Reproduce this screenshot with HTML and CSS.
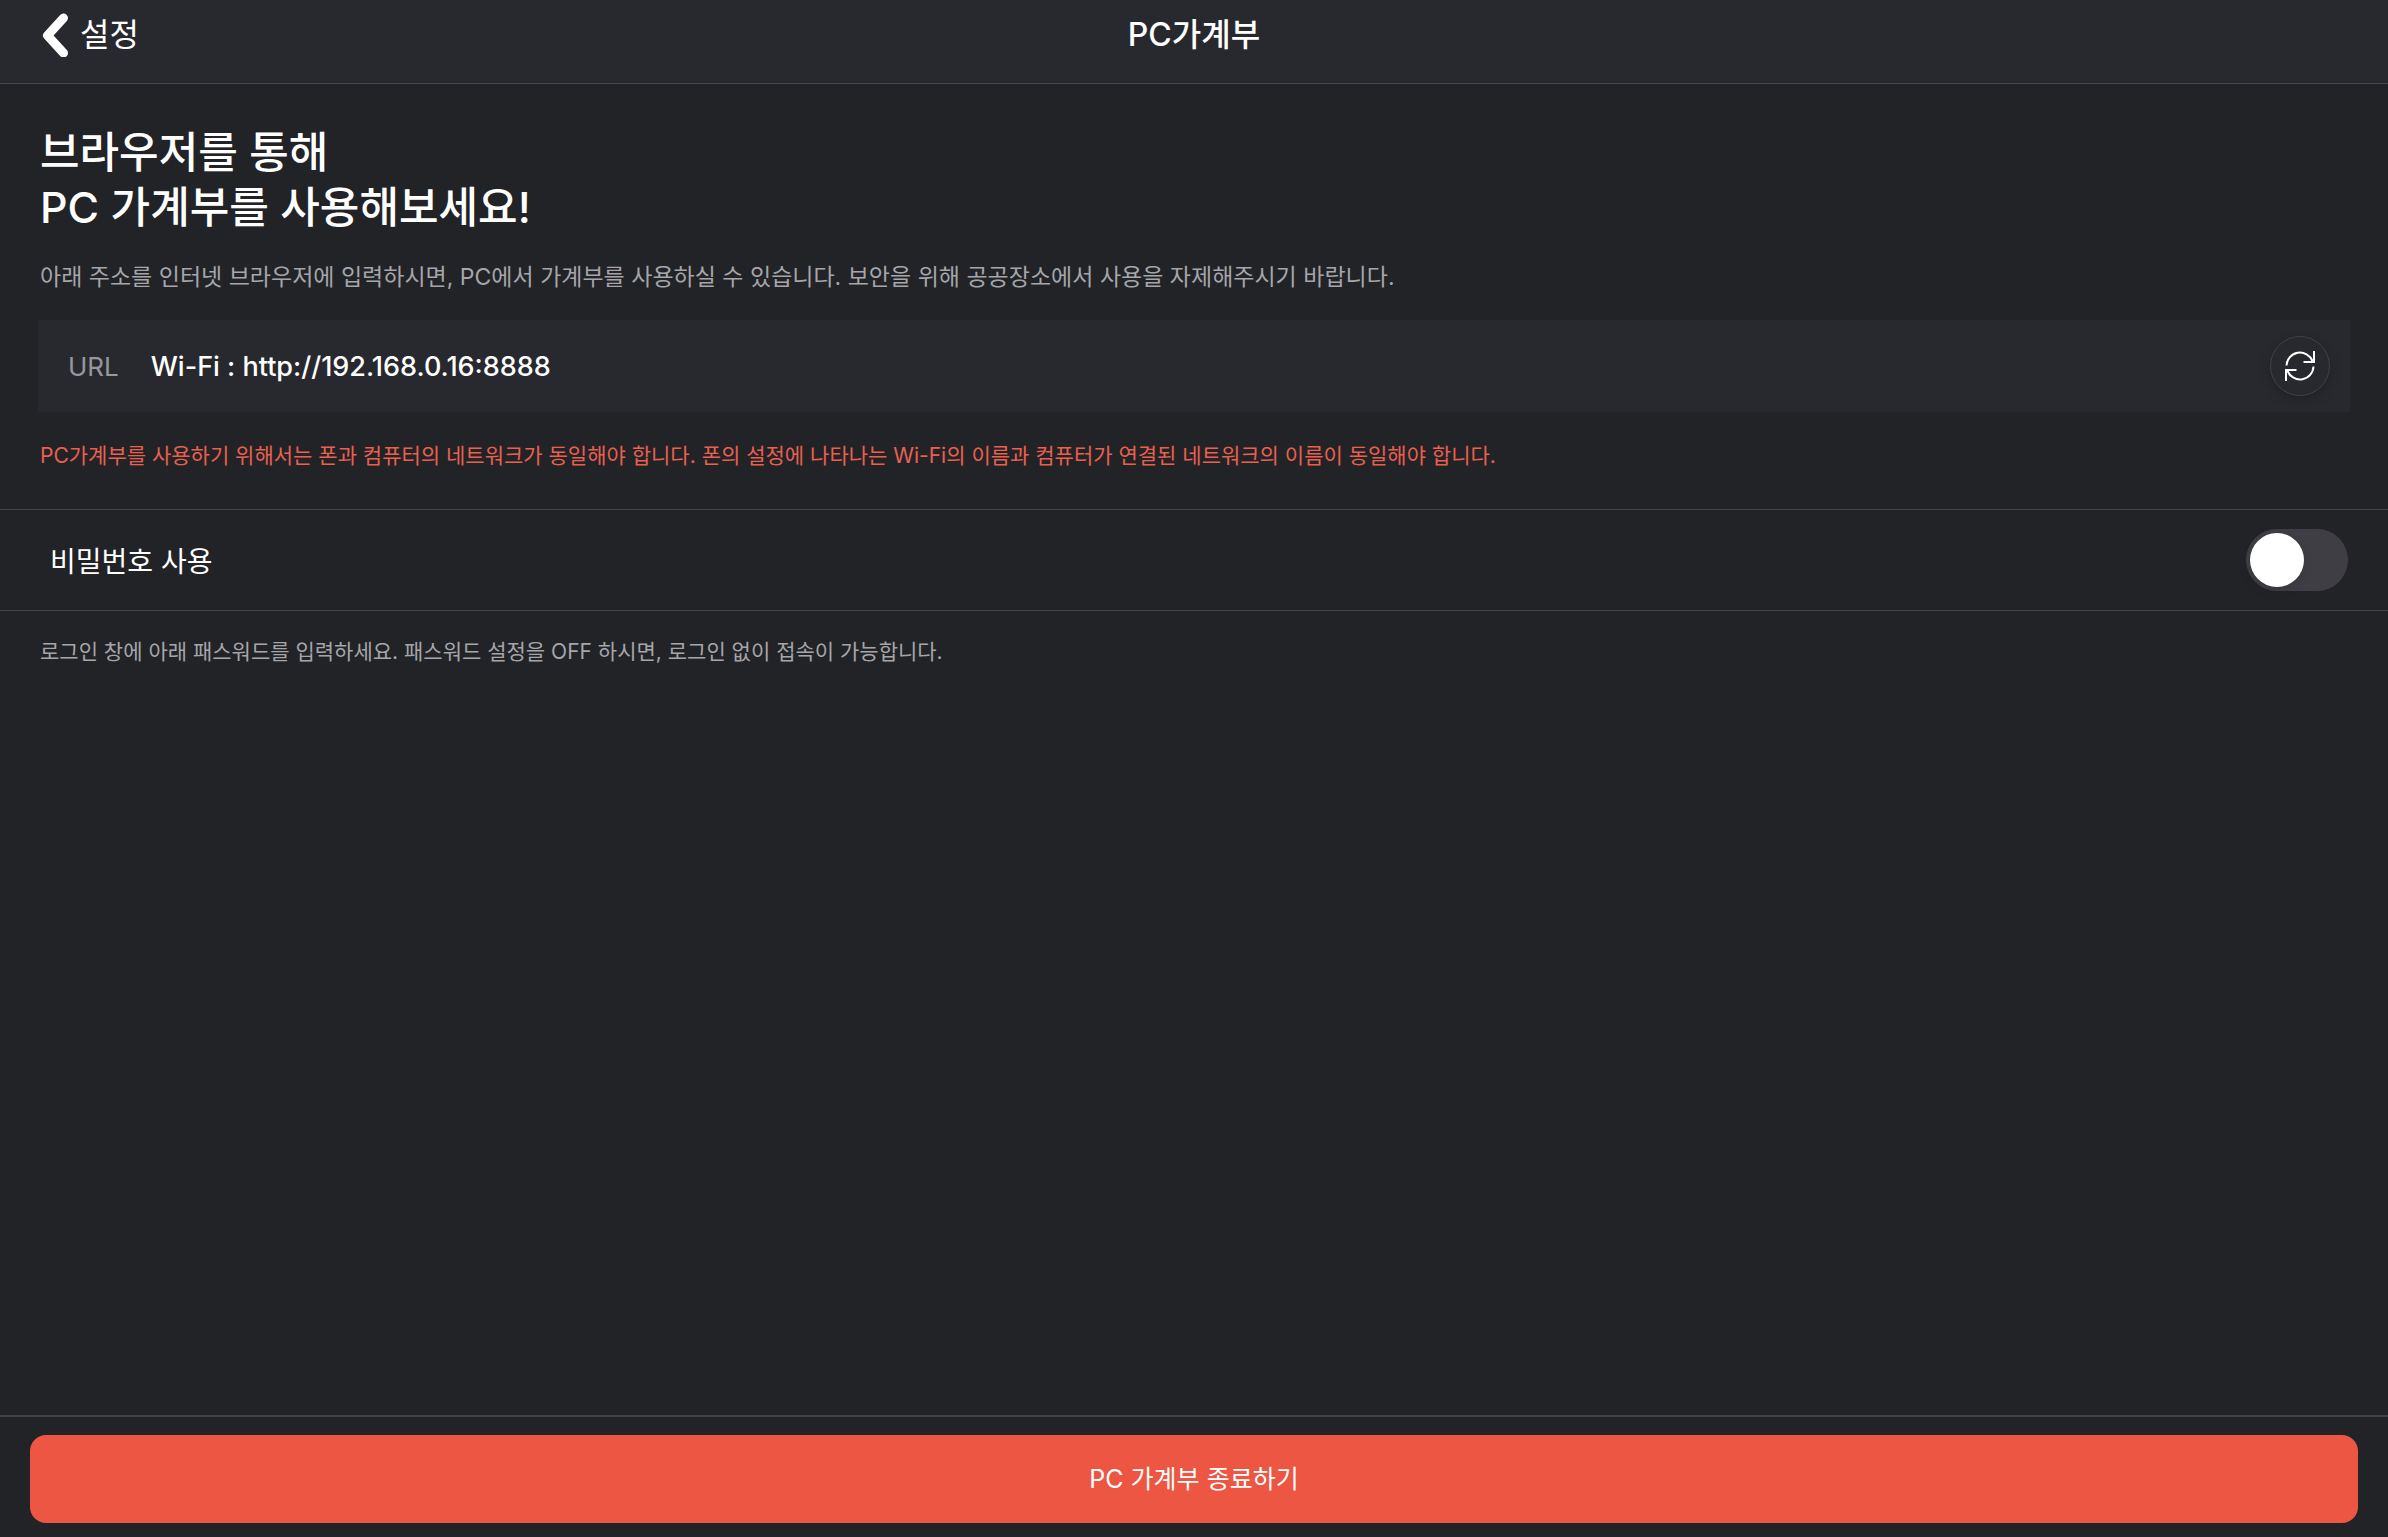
FILE: index.html
```
<!DOCTYPE html>
<html lang="ko">
<head>
    <meta charset="UTF-8">
    <meta name="viewport" content="width=device-width, initial-scale=1.0">
    <title>PC가계부</title>
    <link rel="stylesheet" href="styles.css">
</head>
<body>
    <header class="top-bar">
        <a class="back" href="#settings">
            <svg class="back-icon" width="28" height="44" viewBox="0 0 28 44" aria-hidden="true">
                <path d="M23.500 5L7.500 22.500L23.500 40" fill="none" stroke="#fff" stroke-width="9" stroke-linecap="round" stroke-linejoin="round"/>
            </svg>
            <span>설정</span>
        </a>
        <h1 class="top-title">PC가계부</h1>
    </header>

    <main>
        <section class="intro">
            <h2>브라우저를 통해<br>PC 가계부를 사용해보세요!</h2>
            <p class="intro-text">아래 주소를 인터넷 브라우저에 입력하시면, PC에서 가계부를 사용하실 수 있습니다. 보안을 위해 공공장소에서 사용을 자제해주시기 바랍니다.</p>
            <div class="url-box">
                <span class="url-label">URL</span>
                <span class="url-value">Wi-Fi : http://192.168.0.16:8888</span>
                <button class="refresh" type="button" aria-label="새로고침">
                    <svg width="30" height="30" viewBox="0 0 30 30" fill="none" stroke="#fff" stroke-width="2" aria-hidden="true">
                        <path d="M1.500 14.500A13.500 13.500 0 0 1 27.500 10"/>
                        <path d="M29 0V11H18.500"/>
                        <path d="M28.500 15.500A13.500 13.500 0 0 1 2.500 20"/>
                        <path d="M1 30V19H11.500"/>
                    </svg>
                </button>
            </div>
            <p class="warning">PC가계부를 사용하기 위해서는 폰과 컴퓨터의 네트워크가 동일해야 합니다. 폰의 설정에 나타나는 Wi-Fi의 이름과 컴퓨터가 연결된 네트워크의 이름이 동일해야 합니다.</p>
        </section>

        <section class="password-row">
            <label for="usePassword">비밀번호 사용</label>
            <input class="switch" type="checkbox" role="switch" id="usePassword">
        </section>
        <p class="note">로그인 창에 아래 패스워드를 입력하세요. 패스워드 설정을 OFF 하시면, 로그인 없이 접속이 가능합니다.</p>
    </main>

    <footer>
        <button class="exit" type="button">PC 가계부 종료하기</button>
    </footer>
</body>
</html>
```
FILE: styles.css
```
* {
    box-sizing: border-box;
}

body {
    font-family: Inter, 'Noto Sans CJK KR', sans-serif;
    margin: 0;
    min-height: 100vh;
    display: flex;
    flex-direction: column;
    background-color: #222327;
    color: #fff;
}

h1, h2, p {
    margin: 0;
}

.top-bar {
    display: grid;
    grid-template-columns: 1fr auto 1fr;
    align-items: center;
    height: 84px;
    padding: 0 40px 14px;
    background-color: #28292e;
    border-bottom: 1px solid #46464c;
}

.back {
    display: flex;
    align-items: center;
    gap: 12px;
    color: #fff;
    font-size: 32px;
    line-height: 40px;
    text-decoration: none;
}

.top-title {
    font-size: 32px;
    line-height: 40px;
    font-weight: 500;
}

main {
    flex: 1;
}

.intro {
    padding: 41px 38px 37px;
}

h2 {
    padding-left: 2px;
    font-size: 43px;
    line-height: 55px;
    font-weight: 500;
}

.intro-text {
    padding: 25px 2px 26px;
    font-size: 23px;
    line-height: 34px;
    color: #a6a6aa;
}

.url-box {
    display: flex;
    align-items: center;
    gap: 32px;
    height: 92px;
    padding: 0 20px 0 30px;
    background-color: #28292e;
    font-size: 26px;
}

.url-label {
    color: #97979c;
}

.url-value {
    font-size: 27px;
    font-weight: 500;
}

.refresh {
    display: flex;
    align-items: center;
    justify-content: center;
    width: 60px;
    height: 60px;
    margin-left: auto;
    padding: 0;
    border: 1px solid #414147;
    border-radius: 50%;
    background-color: #28292e;
    box-shadow: 0 4px 12px rgba(0, 0, 0, 0.2);
    cursor: pointer;
}

.warning {
    padding: 28px 2px 0;
    font-size: 21px;
    line-height: 32px;
    color: #e9604f;
}

.password-row {
    display: flex;
    align-items: center;
    justify-content: space-between;
    height: 102px;
    padding: 0 40px 0 50px;
    border-top: 1px solid #434349;
    border-bottom: 1px solid #434349;
    font-size: 28px;
}

.switch {
    appearance: none;
    width: 102px;
    height: 62px;
    margin: 0;
    padding: 4px;
    border-radius: 31px;
    background-color: #3f3e44;
    cursor: pointer;
}

.switch::before {
    content: "";
    display: block;
    width: 54px;
    height: 54px;
    border-radius: 50%;
    background-color: #fff;
    box-shadow: 0 4px 12px rgba(0, 0, 0, 0.1);
    transition: margin-left 0.2s;
}

.switch:checked {
    background-color: #ec5642;
}

.switch:checked::before {
    margin-left: 40px;
}

.note {
    padding: 25px 40px;
    font-size: 21px;
    line-height: 32px;
    color: #a6a6aa;
}

footer {
    padding: 18px 30px 14px;
    border-top: 2px solid #414147;
}

.exit {
    display: block;
    width: 100%;
    height: 88px;
    padding: 0 0 4px;
    border: 0;
    border-radius: 16px;
    background-color: #ec5642;
    color: #fff;
    font-family: inherit;
    font-size: 25px;
    cursor: pointer;
}
```
